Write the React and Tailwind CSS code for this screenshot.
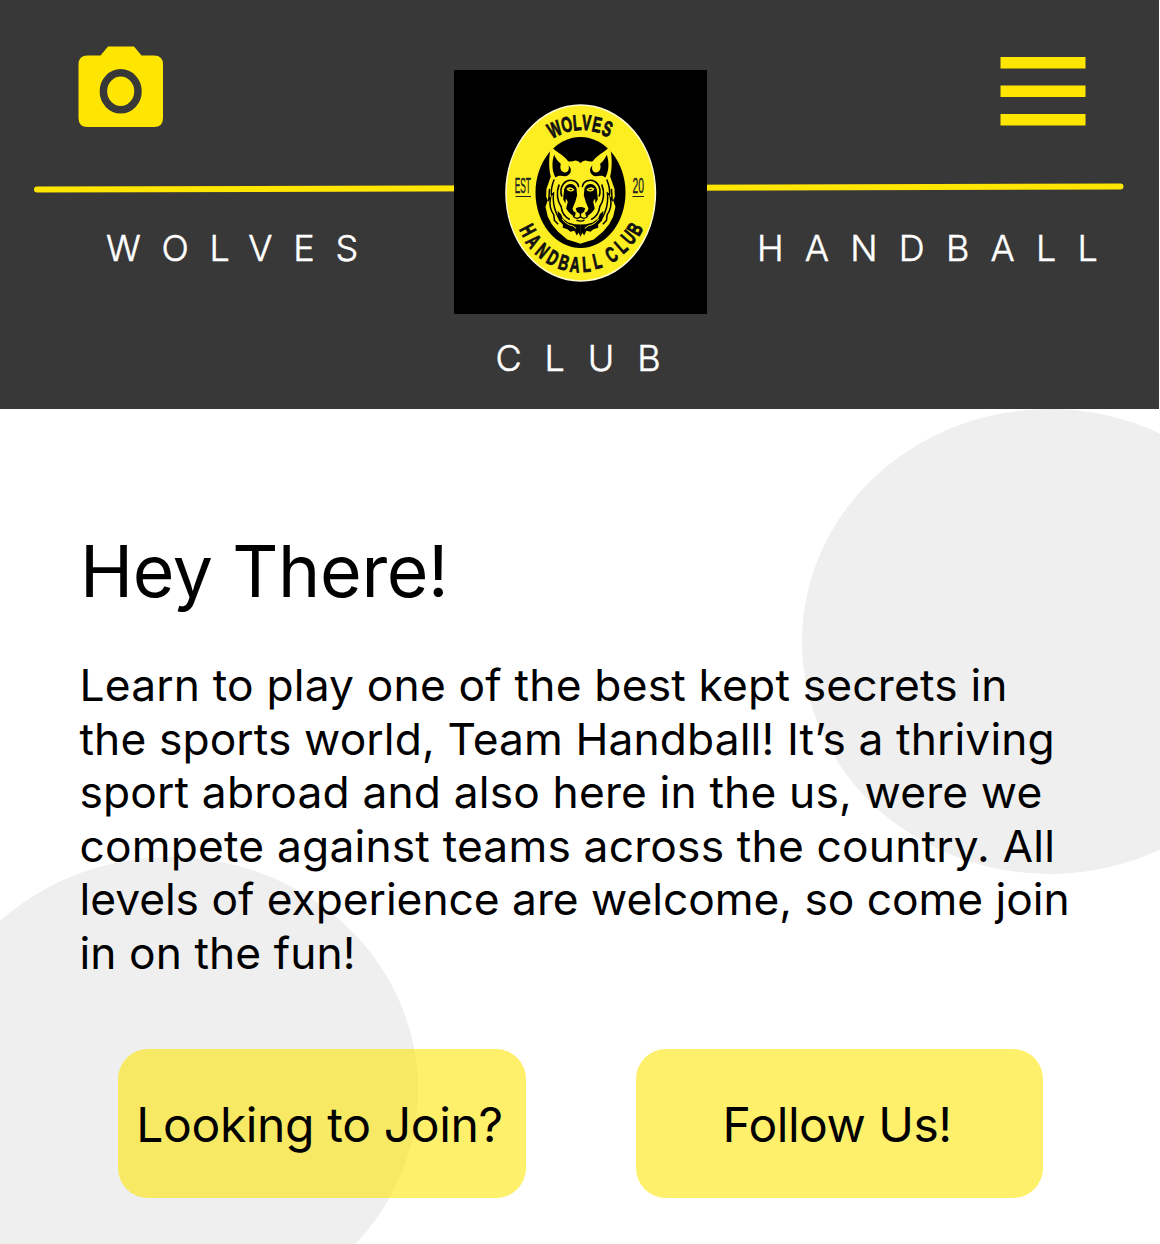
const ringLetters = [
  ["W", 554.3, 129, -25], ["O", 566.5, 124.3, -14], ["L", 577, 122.6, -5], ["V", 586.5, 122.6, 4], ["E", 597, 124.6, 12], ["S", 607.3, 128.6, 20],
  ["H", 528, 230, 62], ["A", 533.8, 241, 51], ["N", 542.7, 250.5, 40], ["D", 553, 257.7, 29], ["B", 564, 262.3, 17], ["A", 575, 264.5, 6], ["L", 586.3, 264, -4], ["L", 597, 261, -13],
  ["C", 611.3, 254.3, -31], ["L", 621, 246, -41], ["U", 628.3, 237.3, -50], ["B", 634.7, 228.8, -60],
];

function Camera() {
  return (
    <svg className="mt-[46px] ml-[78px] h-[81px] w-[85px]" viewBox="78 46 85 81" role="img" aria-label="Camera">
      <path fill="#ffe600" d="M108 46.5H134L141.5 55.5H154Q163 55.5 163 64.5V118Q163 127 154 127H87.5Q78.5 127 78.5 118V64.5Q78.5 55.5 87.5 55.5H100.5Z" />
      <ellipse cx="120.7" cy="91.3" rx="17.3" ry="18.5" fill="#ffe600" stroke="#383838" strokeWidth="7.5" />
    </svg>
  );
}

function WolfHalf() {
  return (
    <g>
      <path fill="#fcee21" d="M153 101Q142 91 134 94Q124 98 115 95C104 78 82 70 64 51C56 82 57 118 63 141L50 178L49 202L54 212L47 232L54 262L66 284L84 306L112 330L153 343Z" />
      <path d="M73 76C65 100 67 126 77 144C87 136 96 139 107 140C122 137 130 121 116 107C121 122 111 133 99 127C89 121 92 109 93 103C85 97 78 88 73 76Z" />
      <path fill="none" stroke="#000" strokeWidth="4.5" d="M73 150C66 168 63 182 65 196L71 191C69 212 71 229 78 247C85 266 92 278 108 287M59 178L57 211L62 205C58 226 61 241 72 256L74 273L85 284" />
      <path fill="none" stroke="#000" strokeWidth="5" d="M96 201C86 169 108 146 132 154Q145 160 147 173M88 165C78 190 83 216 94 231C96 249 106 263 120 270" />
      <path d="M103 179C109 159 133 158 140 176L142 197L136 218L128 237L131 245L138 250L135 262Q119 254 109 237L114 217L108 207L107 222L100 209Z" />
      <path fill="#fcee21" d="M110 178Q119 168 134 180Q131 187 121 186Q113 186 110 178Z" />
      <path d="M116 180Q122 176 129 181Q122 184 116 180ZM83 244L94 254L99 267L115 279L135 284L153 285V323L146 310L141 318L134 304L122 307L113 299L99 295L99 285L87 273Z" />
      <path fill="none" stroke="#fcee21" strokeWidth="3" d="M97 268Q108 285 129 289L139 297" />
    </g>
  );
}

function Logo() {
  return (
    <svg className="h-[244px] w-[253px] bg-black" viewBox="454 70 253 244" fontFamily="'Liberation Sans', sans-serif">
      <ellipse cx="580.7" cy="193" rx="74.7" ry="88" fill="#fcee21" stroke="#fffbd0" strokeWidth="1.6" />
      <ellipse cx="580.5" cy="192.500" rx="45" ry="55.5" fill="#000" />
      <g fill="#111" stroke="#111" strokeWidth=".9" fontWeight="700" fontSize="21.5" textAnchor="middle">
        {ringLetters.map(([letter, x, y, angle], i) => (
          <text key={i} y="7.6" transform={`translate(${x} ${y}) rotate(${angle}) scale(.64 1)`}>{letter}</text>
        ))}
      </g>
      <g fill="#222" stroke="#222" strokeWidth=".4" fontSize="22">
        <text transform="translate(514.700 193.300) scale(.38 1)">EST</text>
        <text transform="translate(632.500 193.300) scale(.47 1)">20</text>
        <path d="M515.500 196.500H531M632.500 196.500H644" strokeWidth="1.2" />
      </g>
      <g transform="translate(529.800 129.500) scale(.33333)">
        <WolfHalf />
        <g transform="translate(304 0) scale(-1 1)"><WolfHalf /></g>
        <path fill="#fcee21" d="M149 105H155V228H149Z" />
        <path d="M138 236Q152 229 166 236L163 247L152 254L141 247Z" />
        <path fill="none" stroke="#000" strokeWidth="4" d="M152 251V262M130 260Q140 272 152 262Q164 272 174 260M140 272Q152 278 164 272" />
      </g>
    </svg>
  );
}

export default function App() {
  return (
    <div className="relative h-[1244px] w-[1160px] overflow-hidden bg-white font-['Inter',sans-serif] text-black">
      <header className="relative h-[409px] w-[1159px] bg-[#383838] text-white">
        <svg className="absolute top-[180px] left-0 h-[16px] w-[1159px]" viewBox="0 180 1159 16">
          <path d="M37 189.500L1120.500 186.500" stroke="#ffe600" strokeWidth="6" strokeLinecap="round" />
        </svg>
        <div className="relative grid h-[314px] grid-cols-[454px_253px_452px]">
          <div>
            <Camera />
            <p className="mt-[99px] ml-[106px] text-[36px] leading-[44px] font-light tracking-[20.750px] [-webkit-text-stroke:0.5px_white]">WOLVES</p>
          </div>
          <div className="pt-[70px]"><Logo /></div>
          <div>
            <svg className="mt-[57px] ml-[293px] h-[69px] w-[86px]" viewBox="1000 57 86 69" role="img" aria-label="Menu">
              <path fill="#ffe600" d="M1000.500 57H1085.500V68.500H1000.500ZM1000.500 85.500H1085.500V97H1000.500ZM1000.500 114H1085.500V125.500H1000.500Z" />
            </svg>
            <p className="mt-[100px] ml-[50px] text-[36px] leading-[44px] font-light tracking-[21.200px] [-webkit-text-stroke:0.5px_white]">HANDBALL</p>
          </div>
        </div>
        <p className="relative mt-[22px] ml-[495.500px] text-[36px] leading-[44px] font-light tracking-[22.900px] [-webkit-text-stroke:0.5px_white]">CLUB</p>
      </header>
      <div className="absolute top-[409px] left-[802px] h-[465px] w-[495px] rounded-[50%] bg-[#efefef]" />
      <div className="absolute top-[857px] left-[-77px] h-[465px] w-[495px] rounded-[50%] bg-[#efefef]" />
      <main className="relative pt-[119px] pl-[80px]">
        <h1 className="text-[71.500px] leading-[87px] tracking-[-0.350px]">Hey There!</h1>
        <p className="mt-[44px] -ml-[0.500px] text-[44.300px] leading-[53.600px] whitespace-nowrap">
          <span className="tracking-[0.190px]">Learn to play one of the best kept secrets in</span><br />
          <span className="tracking-[0.120px]">the sports world, Team Handball! It’s a thriving</span><br />
          <span className="tracking-[0.165px]">sport abroad and also here in the us, were we</span><br />
          <span className="tracking-[0.190px]">compete against teams across the country. All</span><br />
          <span className="tracking-[-0.030px]">levels of experience are welcome, so come join</span><br />
          <span className="tracking-[0.070px]">in on the fun!</span>
        </p>
        <div className="mt-[68px] ml-[38.200px] flex gap-[110.200px] text-[48px]">
          <button className="h-[149px] w-[407.500px] rounded-[30px] bg-[#ffe600]/58 pt-[3px] pr-[5px] tracking-[-0.370px]">Looking to Join?</button>
          <button className="h-[149px] w-[407.500px] rounded-[30px] bg-[#ffe600]/58 pt-[3px] pr-[5px] tracking-[-0.500px]">Follow Us!</button>
        </div>
      </main>
    </div>
  );
}
